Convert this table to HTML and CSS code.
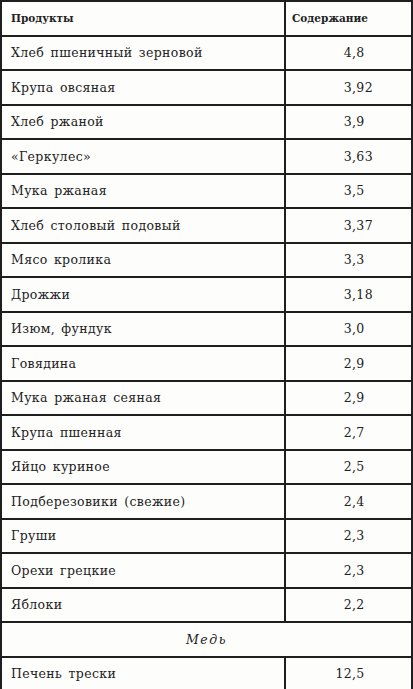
FILE: index.html
```html
<!DOCTYPE html>
<html lang="ru">
<head>
<meta charset="utf-8">
<link rel="stylesheet" href="styles.css">
</head>
<body>
<table class="tbl">
  <thead>
    <tr class="head"><th class="c1">Продукты</th><th class="c2">Содержание</th></tr>
  </thead>
  <tbody>
    <tr><td class="c1">Хлеб пшеничный зерновой</td><td class="c2"><span class="i">4</span>,8</td></tr>
    <tr><td class="c1">Крупа овсяная</td><td class="c2"><span class="i">3</span>,92</td></tr>
    <tr><td class="c1">Хлеб ржаной</td><td class="c2"><span class="i">3</span>,9</td></tr>
    <tr><td class="c1">«Геркулес»</td><td class="c2"><span class="i">3</span>,63</td></tr>
    <tr><td class="c1">Мука ржаная</td><td class="c2"><span class="i">3</span>,5</td></tr>
    <tr><td class="c1">Хлеб столовый подовый</td><td class="c2"><span class="i">3</span>,37</td></tr>
    <tr><td class="c1">Мясо кролика</td><td class="c2"><span class="i">3</span>,3</td></tr>
    <tr><td class="c1">Дрожжи</td><td class="c2"><span class="i">3</span>,18</td></tr>
    <tr><td class="c1">Изюм, фундук</td><td class="c2"><span class="i">3</span>,0</td></tr>
    <tr><td class="c1">Говядина</td><td class="c2"><span class="i">2</span>,9</td></tr>
    <tr><td class="c1">Мука ржаная сеяная</td><td class="c2"><span class="i">2</span>,9</td></tr>
    <tr><td class="c1">Крупа пшенная</td><td class="c2"><span class="i">2</span>,7</td></tr>
    <tr><td class="c1">Яйцо куриное</td><td class="c2"><span class="i">2</span>,5</td></tr>
    <tr><td class="c1">Подберезовики (свежие)</td><td class="c2"><span class="i">2</span>,4</td></tr>
    <tr><td class="c1">Груши</td><td class="c2"><span class="i">2</span>,3</td></tr>
    <tr><td class="c1">Орехи грецкие</td><td class="c2"><span class="i">2</span>,3</td></tr>
    <tr><td class="c1">Яблоки</td><td class="c2"><span class="i">2</span>,2</td></tr>
    <tr><td class="section" colspan="2">Медь</td></tr>
    <tr class="last"><td class="c1">Печень трески</td><td class="c2"><span class="i">12</span>,5</td></tr>
  </tbody>
</table>
</body>
</html>
```

FILE: styles.css
```css
html, body {
  margin: 0;
  padding: 0;
  background: #fdfdfc;
}
.tbl {
  border-collapse: collapse;
  width: 413px;
  table-layout: fixed;
  font-family: "DejaVu Serif", serif;
  color: #222222;
}
.tbl th, .tbl td {
  border: 2px solid #1e1e1e;
  height: 32.5px;
  padding: 0;
  box-sizing: content-box;
  vertical-align: middle;
}
.tbl .c1 {
  width: 273px;
  text-align: left;
  padding-left: 9px;
}
.head th {
  font-size: 10.5px;
  font-weight: bold;
  letter-spacing: 0;
}
.head th.c2 {
  text-align: left;
  padding-left: 6px;
}
.tbl td {
  font-size: 12.5px;
  letter-spacing: 0.35px;
  word-spacing: 2px;
}
.tbl td.c2 {
  padding-left: 0;
}
.i {
  display: inline-block;
  width: 66px;
  text-align: right;
}
.tbl td.section {
  text-align: center;
  font-style: italic;
  letter-spacing: 1.5px;
}
```
